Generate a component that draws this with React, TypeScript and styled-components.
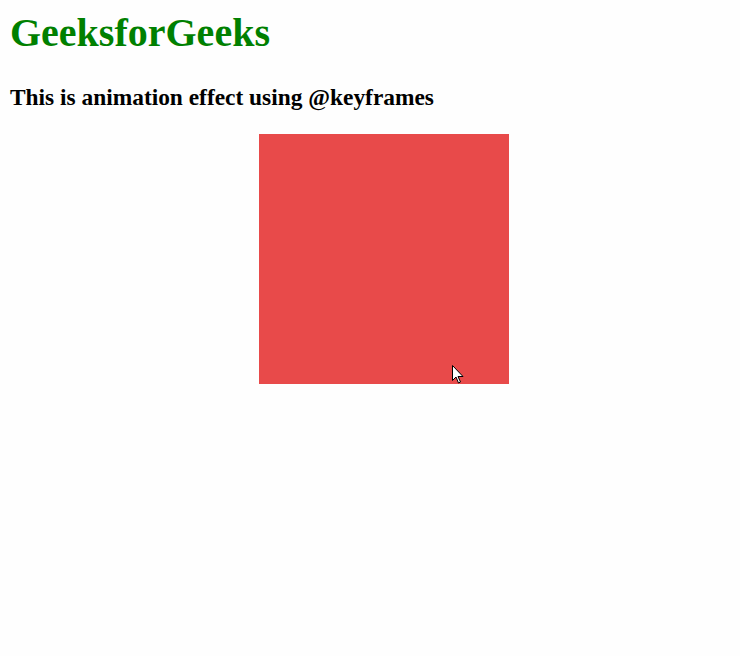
import React from "react";
import styled, { createGlobalStyle } from "styled-components";

const GlobalStyle = createGlobalStyle`
  html, body {
    margin: 0;
    padding: 0;
    background: #fefefe;
  }
  body {
    font-family: "Liberation Serif", "Times New Roman", serif;
    width: 740px;
    height: 656px;
    overflow: hidden;
  }
`;

const Page = styled.div`
  position: relative;
  padding: 10px 10px;
`;

const Title = styled.h1`
  margin: 0;
  font-size: 40px;
  line-height: 46px;
  font-weight: bold;
  color: #008000;
`;

const Subtitle = styled.h3`
  margin: 28px 0 0;
  font-size: 23.4px;
  line-height: 27px;
  font-weight: bold;
  color: #000;
`;

const Box = styled.div`
  width: 250px;
  height: 250px;
  margin: 23px 0 0 249px;
  background: #e84a4a;
`;

const Cursor = styled.svg`
  position: absolute;
  left: 452px;
  top: 365px;
`;

const App: React.FC = () => {
  return (
    <Page>
      <GlobalStyle />
      <Title>GeeksforGeeks</Title>
      <Subtitle>This is animation effect using @keyframes</Subtitle>
      <Box />
      <Cursor width="13" height="20" viewBox="0 0 13 20">
        <path
          d="M0.5 0.5 L0.5 15.5 L4 12 L6.5 18 L8.5 17 L6 11.5 L11 11.5 Z"
          fill="#fff"
          stroke="#000"
          strokeWidth="1"
          strokeLinejoin="miter"
        />
      </Cursor>
    </Page>
  );
};

export default App;
